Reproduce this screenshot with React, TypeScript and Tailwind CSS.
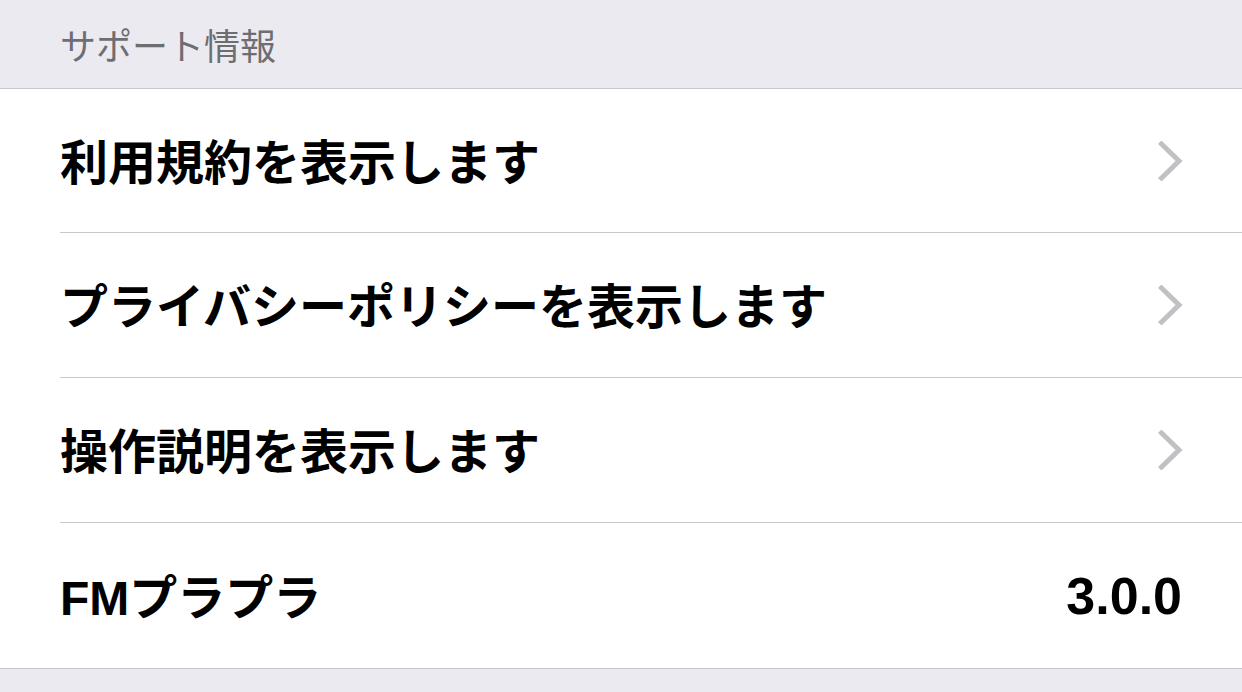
import React from 'react';

// Support info section of a settings list
const ITEMS = [
  { label: '利用規約を表示します', chevron: true },
  { label: 'プライバシーポリシーを表示します', chevron: true },
  { label: '操作説明を表示します', chevron: true },
  { label: 'FMプラプラ', value: '3.0.0' },
];

function Chevron() {
  return (
    <svg width="26" height="40" viewBox="0 0 26 40" fill="none" className="shrink-0">
      <path d="M3.5 3 L21 20 L3.5 37" stroke="#C0C0C5" strokeWidth="5" strokeLinecap="square" />
    </svg>
  );
}

function App() {
  return (
    <div
      className="min-h-screen bg-[#EBEAF0]"
      style={{ fontFamily: '"Liberation Sans", "Noto Sans CJK JP", sans-serif' }}
    >
      <div className="h-[89px] flex items-center pl-[60px] border-b border-[#C8C7CC]">
        <span className="text-[36px] text-[#6D6D72] leading-none" style={{ fontFamily: '"Noto Sans CJK JP", sans-serif' }}>
          サポート情報
        </span>
      </div>

      <div className="bg-white border-b border-[#C8C7CC]">
        {ITEMS.map((item, i) => {
          const last = i === ITEMS.length - 1;
          return (
            <div key={item.label} className="pl-[60px]">
              <div
                className={
                  last
                    ? 'h-[145px] flex items-center justify-between pr-[60px]'
                    : i === 0
                      ? 'h-[144px] flex items-center justify-between pr-[58px] border-b border-[#C8C7CC]'
                      : 'h-[145px] flex items-center justify-between pr-[58px] border-b border-[#C8C7CC]'
                }
              >
                <span className="mt-[6px] text-[48px] font-bold text-black leading-none">{item.label}</span>
                {item.chevron && <Chevron />}
                {item.value && (
                  <span className="text-[52px] font-bold text-black leading-none">{item.value}</span>
                )}
              </div>
            </div>
          );
        })}
      </div>
    </div>
  );
}

export default App;
